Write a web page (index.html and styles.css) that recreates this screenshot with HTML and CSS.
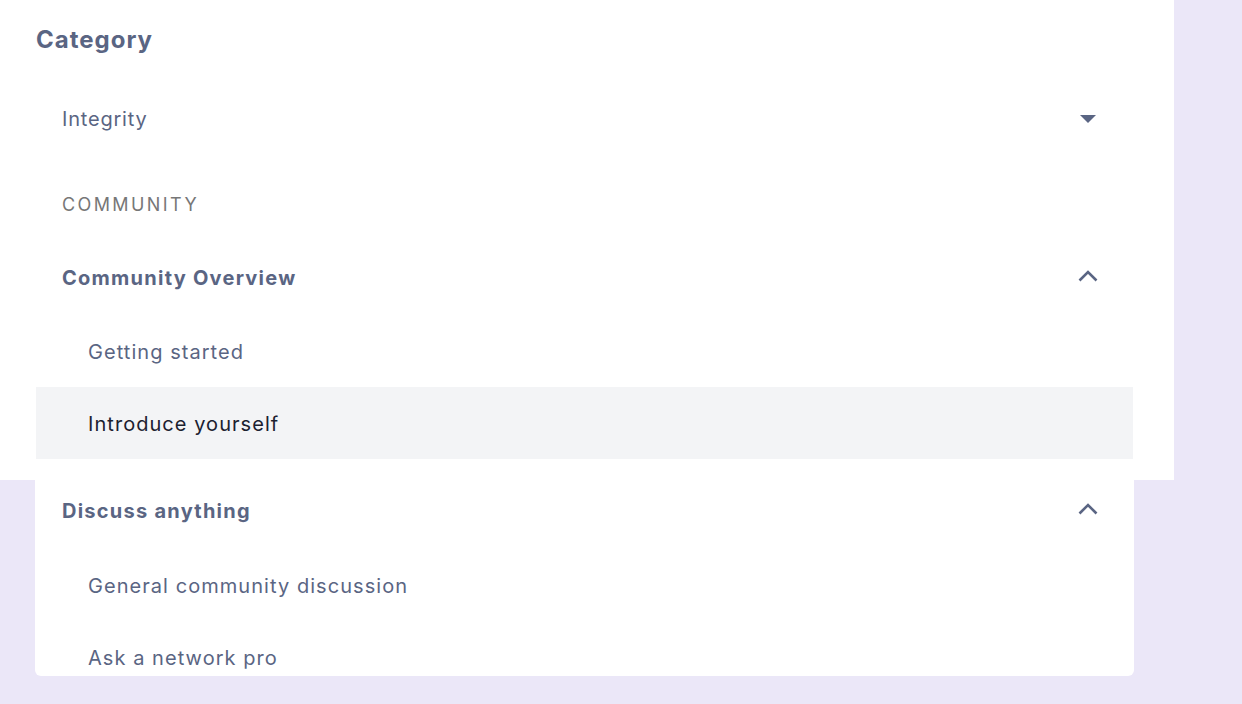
FILE: index.html
```html
<!DOCTYPE html>
<html lang="en">
<head>
    <meta charset="UTF-8">
    <title>Category</title>
    <link rel="stylesheet" href="styles.css">
</head>
<body>
    <!-- Painel do formulário -->
    <div class="panel">
        <h2 class="panel-title">Category</h2>

        <div class="select">
            <span>Integrity</span>
            <svg class="caret" width="16" height="8" viewBox="0 0 16 8"><path d="M0 0h16L8 8z" fill="#5a6583"/></svg>
        </div>

        <!-- Menu aberto -->
        <div class="menu">
            <div class="menu-label">COMMUNITY</div>

            <div class="group">
                <div class="group-head">
                    <span>Community Overview</span>
                    <svg class="chevron" width="20" height="14" viewBox="0 0 20 14"><path d="M1.5 10.5 10 2l8.5 8.5" fill="none" stroke="#5a6583" stroke-width="2.6"/></svg>
                </div>
                <div class="item">Getting started</div>
                <div class="item selected">Introduce yourself</div>
            </div>

            <div class="group">
                <div class="group-head">
                    <span>Discuss anything</span>
                    <svg class="chevron" width="20" height="14" viewBox="0 0 20 14"><path d="M1.5 10.5 10 2l8.5 8.5" fill="none" stroke="#5a6583" stroke-width="2.6"/></svg>
                </div>
                <div class="item">General community discussion</div>
                <div class="item">Ask a network pro</div>
            </div>
        </div>
    </div>
</body>
</html>
```

FILE: styles.css
```css
/* Global */
body {
    margin: 0;
    font-family: Inter, "Noto Sans", sans-serif;
    background-color: #ebe7f8;
    color: #5a6583;
    height: 704px;
    overflow: hidden;
}
.panel {
    position: relative;
    width: 1174px;
    height: 480px;
    box-sizing: border-box;
    padding: 25px 0 0 36px;
    background-color: #fff;
}
.panel-title {
    margin: 0;
    font-size: 24px;
    line-height: 30px;
    font-weight: 700;
    letter-spacing: 1px;
}
/* Select */
.select {
    display: flex;
    align-items: center;
    justify-content: space-between;
    margin-top: 50px;
    margin-left: -1px;
    padding: 0 38px 0 27px;
    width: 1099px;
    box-sizing: border-box;
    font-size: 20px;
    line-height: 28px;
    letter-spacing: 0.8px;
}
/* Menu */
.menu {
    position: absolute;
    top: 164px;
    left: 35px;
    width: 1099px;
    height: 512px;
    overflow: hidden;
    background-color: #fff;
    border-radius: 0 0 6px 6px;
}
.menu-label {
    padding: 29px 27px 22px;
    font-size: 18px;
    line-height: 24px;
    letter-spacing: 2.4px;
    color: #777;
}
.group + .group {
    margin-top: 13px;
}
.group-head {
    display: flex;
    align-items: center;
    justify-content: space-between;
    padding: 24px 36px 24px 27px;
    font-size: 20px;
    line-height: 28px;
    font-weight: 700;
    letter-spacing: 1.25px;
}
.group-head span {
    position: relative;
    top: 1px;
}
.item {
    margin: 0 1px;
    padding: 23px 52px 21px;
    font-size: 20px;
    line-height: 28px;
    letter-spacing: 1.05px;
}
.group + .group .item {
    padding: 24px 52px 20px;
}
.item.selected {
    background-color: #f3f4f6;
    color: #1c2130;
}
```
